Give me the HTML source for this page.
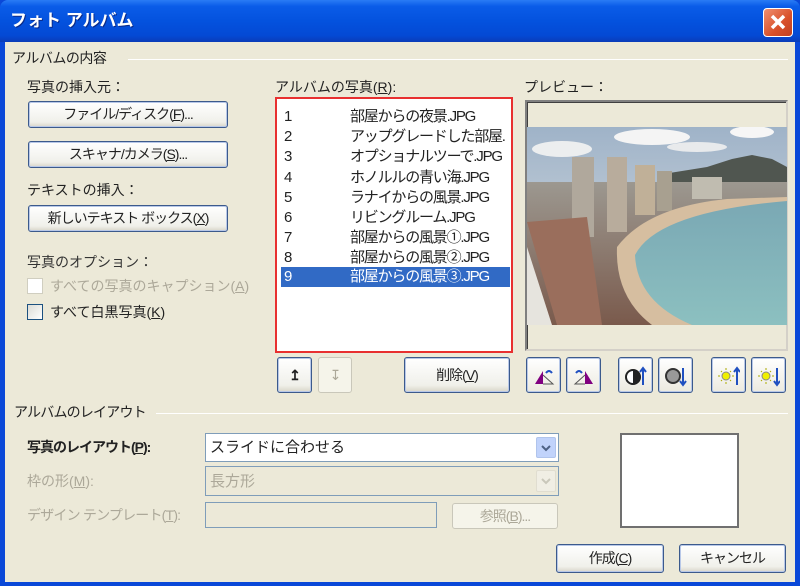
<!DOCTYPE html>
<html><head><meta charset="utf-8"><style>
*{box-sizing:border-box;margin:0;padding:0}
body{width:800px;height:586px;overflow:hidden;background:#0a48d8;font-family:"Liberation Sans","Noto Sans CJK JP",sans-serif;font-size:14px;color:#222;position:relative}
.a{position:absolute;white-space:nowrap;line-height:1}
#title{position:absolute;left:0;top:0;width:800px;height:42px;background:linear-gradient(#2a7cf5 0%,#0a5ce8 15%,#0452de 50%,#0449d4 85%,#0a3cb8 100%);border-radius:8px 8px 0 0}
#body{position:absolute;left:5px;top:42px;width:790px;height:540px;background:#ece9d8}
.btn{position:absolute;border:1px solid #3c5a8c;border-radius:3px;background:linear-gradient(#fff,#f0f0ea 80%,#d8d5c8);box-shadow:inset 0 0 0 1px #b8c8e8;text-align:center;font-size:14px;letter-spacing:-1px}
.dis{color:#aca899;border-color:#c9c7ba;box-shadow:none;background:#f5f4ea}
.line{position:absolute;height:1px;background:#c8c5b5;border-bottom:1px solid #fff}
.box{position:absolute;border:1px solid #7f9db9;background:#fff}
.row{position:absolute;left:4px;width:229px;height:20px;line-height:20px;font-size:15px;letter-spacing:-1.2px}
.row b{font-weight:normal;position:absolute;left:3px}
.row i{font-style:normal;position:absolute;left:69px}
.ib{position:absolute;top:357px;width:35px;height:36px;border:1px solid #3c5a8c;border-radius:3px;background:linear-gradient(#fff,#eceadf);box-shadow:inset 0 0 0 1px #b8c8e8}
.ib svg{position:absolute;left:6px;top:7px}
.g{color:#aca899}
</style></head><body>
<div id="title"></div>
<div class="a" style="left:10px;top:12px;color:#fff;font-weight:bold;font-size:17px;text-shadow:1px 1px #0a2a88">フォト アルバム</div>
<div style="position:absolute;left:763px;top:8px;width:30px;height:29px;border:1px solid #fff;border-radius:4px;background:linear-gradient(135deg,#f09070,#d8502a 60%,#c04020)"><svg width="28" height="27"><path d="M8 7L20 19M20 7L8 19" stroke="#fff" stroke-width="3.5"/></svg></div>
<div id="body"></div>

<div class="a" style="left:12px;top:51px;font-size:14px;letter-spacing:-.5px">アルバムの内容</div>
<div class="line" style="left:128px;top:59px;width:660px"></div>
<div class="a" style="left:27px;top:80px">写真の挿入元：</div>
<div class="btn" style="left:28px;top:101px;width:200px;height:27px;line-height:25px">ファイル/ディスク(<u>F</u>)...</div>
<div class="btn" style="left:28px;top:141px;width:200px;height:27px;line-height:25px">スキャナ/カメラ(<u>S</u>)...</div>
<div class="a" style="left:27px;top:183px">テキストの挿入：</div>
<div class="btn" style="left:28px;top:205px;width:200px;height:27px;line-height:25px">新しいテキスト ボックス(<u>X</u>)</div>
<div class="a" style="left:27px;top:255px;color:#333">写真のオプション：</div>
<div style="position:absolute;left:27px;top:278px;width:16px;height:16px;border:1px solid #d0cec0;background:#fff"></div>
<div class="a g" style="left:50px;top:279px">すべての写真のキャプション(<u>A</u>)</div>
<div style="position:absolute;left:27px;top:304px;width:16px;height:16px;border:1px solid #1c5180;background:linear-gradient(135deg,#dcdcd6,#fff)"></div>
<div class="a" style="left:50px;top:305px">すべて白黒写真(<u>K</u>)</div>

<div class="a" style="left:275px;top:80px">アルバムの写真(<u>R</u>):</div>
<div style="position:absolute;left:275px;top:97px;width:238px;height:256px;border:2px solid #e83030;background:#fff">
<div class="row" style="top:8px"><b>1</b><i>部屋からの夜景.JPG</i></div>
<div class="row" style="top:28px;overflow:hidden"><b>2</b><i>アップグレードした部屋.</i></div>
<div class="row" style="top:48px"><b>3</b><i>オプショナルツーで.JPG</i></div>
<div class="row" style="top:69px"><b>4</b><i>ホノルルの青い海.JPG</i></div>
<div class="row" style="top:89px"><b>5</b><i>ラナイからの風景.JPG</i></div>
<div class="row" style="top:109px"><b>6</b><i>リビングルーム.JPG</i></div>
<div class="row" style="top:129px;overflow:hidden"><b>7</b><i>部屋からの風景①.JPG</i></div>
<div class="row" style="top:149px;overflow:hidden"><b>8</b><i>部屋からの風景②.JPG</i></div>
<div class="row" style="top:168px;background:#316ac5;color:#fff;overflow:hidden"><b>9</b><i>部屋からの風景③.JPG</i></div>
</div>
<div class="btn" style="left:277px;top:357px;width:35px;height:36px;line-height:34px;font-weight:bold">↥</div>
<div class="btn dis" style="left:318px;top:357px;width:34px;height:36px;line-height:34px">↧</div>
<div class="btn" style="left:404px;top:357px;width:106px;height:36px;line-height:34px">削除(<u>V</u>)</div>

<div class="a" style="left:524px;top:80px">プレビュー：</div>
<div style="position:absolute;left:525px;top:100px;width:263px;height:251px;border:2px solid #808080;border-right-color:#d4d0c8;border-bottom-color:#d4d0c8;background:#ece9d8;box-shadow:inset 1px 1px #404040">
<svg width="260" height="198" style="position:absolute;left:0;top:25px">
<defs><linearGradient id="sky" x1="0" y1="0" x2="0" y2="1"><stop offset="0" stop-color="#9fb3c8"/><stop offset="1" stop-color="#dfe2e4"/></linearGradient>
<linearGradient id="sea" x1="0" y1="0" x2="0" y2="1"><stop offset="0" stop-color="#7aa8b4"/><stop offset="1" stop-color="#8cc0c0"/></linearGradient>
<linearGradient id="city" x1="0" y1="0" x2="0" y2="1"><stop offset="0" stop-color="#9c9890"/><stop offset="1" stop-color="#7a5a4c"/></linearGradient></defs>
<rect width="260" height="198" fill="url(#sky)"/>
<ellipse cx="125" cy="10" rx="38" ry="8" fill="#f4f4f4"/><ellipse cx="225" cy="5" rx="22" ry="6" fill="#f6f6f6"/><ellipse cx="35" cy="22" rx="30" ry="8" fill="#eceeef"/><ellipse cx="170" cy="20" rx="30" ry="5" fill="#e8eaec"/>
<path d="M130 48 L180 40 L205 32 L225 28 L245 32 L260 40 L260 72 L130 72Z" fill="#505650"/>
<path d="M0 55 L260 55 L260 198 L0 198Z" fill="url(#city)"/>
<rect x="45" y="30" width="22" height="80" fill="#b0a89c"/><rect x="80" y="30" width="20" height="75" fill="#b8ac9c"/>
<rect x="108" y="38" width="20" height="50" fill="#c0b098"/><rect x="130" y="44" width="15" height="40" fill="#a8a090"/>
<rect x="165" y="50" width="30" height="22" fill="#c0bcb0"/>
<path d="M0 95 L60 90 L75 198 L30 198 Z" fill="#9a6e5c"/>
<path d="M90 120 Q120 80 200 72 L260 70 L260 198 L125 198 Q88 170 90 120Z" fill="#d6bea0"/>
<path d="M108 128 Q130 85 260 74 L260 198 L165 198 Q110 175 108 128Z" fill="url(#sea)"/>
<path d="M0 120 L25 198 L0 198Z" fill="#e6e4de"/>
</svg>
</div>
<div class="ib" style="left:526px"><svg width="22" height="22"><path d="M2 19 L10 6 L10 19Z" fill="#800080"/><path d="M10 19 L20 19 L10 10" fill="none" stroke="#555"/><path d="M13 8 Q16 4 19 8" stroke="#2050c0" fill="none" stroke-width="2"/></svg></div>
<div class="ib" style="left:566px"><svg width="22" height="22"><path d="M20 19 L12 6 L12 19Z" fill="#800080"/><path d="M12 19 L2 19 L12 10" fill="none" stroke="#555"/><path d="M3 8 Q6 4 9 8" stroke="#2050c0" fill="none" stroke-width="2"/></svg></div>
<div class="ib" style="left:618px"><svg width="22" height="22"><circle cx="8" cy="12" r="7" fill="#fff" stroke="#222" stroke-width="2"/><path d="M8 5 A7 7 0 0 1 8 19Z" fill="#222"/><path d="M18 20V4M15 7L18 3L21 7" stroke="#2050c0" stroke-width="2" fill="none"/></svg></div>
<div class="ib" style="left:658px"><svg width="22" height="22"><circle cx="8" cy="11" r="7" fill="#999" stroke="#333" stroke-width="2"/><path d="M18 3V19M15 16L18 20L21 16" stroke="#2050c0" stroke-width="2" fill="none"/></svg></div>
<div class="ib" style="left:711px"><svg width="22" height="22"><circle cx="8" cy="11" r="4" fill="#f0f000" stroke="#888"/><path d="M8 3V5M8 17V19M0 11H2M14 11H16M3 6L4 7M13 6L12 7M3 16L4 15M13 16L12 15" stroke="#aa0"/><path d="M19 20V4M16 7L19 3L22 7" stroke="#2050c0" stroke-width="2" fill="none"/></svg></div>
<div class="ib" style="left:751px"><svg width="22" height="22"><circle cx="8" cy="11" r="4" fill="#f0f000" stroke="#888"/><path d="M8 3V5M8 17V19M0 11H2M14 11H16M3 6L4 7M13 6L12 7M3 16L4 15M13 16L12 15" stroke="#aa0"/><path d="M19 3V19M16 16L19 20L22 16" stroke="#2050c0" stroke-width="2" fill="none"/></svg></div>

<div class="a" style="left:14px;top:405px;letter-spacing:-.8px">アルバムのレイアウト</div>
<div class="line" style="left:156px;top:413px;width:632px"></div>
<div class="a" style="left:27px;top:440px;font-weight:bold;letter-spacing:-1px">写真のレイアウト(<u>P</u>):</div>
<div class="box" style="left:205px;top:433px;width:354px;height:29px"><span class="a" style="left:4px;top:6px;font-size:15px">スライドに合わせる</span>
<div style="position:absolute;right:2px;top:3px;width:20px;height:21px;background:#c1d3fb;border:1px solid #b0c4ec;border-radius:2px"><svg width="18" height="19"><path d="M5 8L9 12L13 8" stroke="#4d6185" stroke-width="2" fill="none"/></svg></div></div>
<div class="a g" style="left:27px;top:474px">枠の形(<u>M</u>):</div>
<div class="box" style="left:205px;top:466px;width:354px;height:30px;background:#ece9d8"><span class="a g" style="left:4px;top:7px;font-size:15px">長方形</span>
<div style="position:absolute;right:2px;top:3px;width:20px;height:22px;border:1px solid #e0ddd0;border-radius:2px;background:#f0eee4"><svg width="18" height="20"><path d="M5 8L9 12L13 8" stroke="#c9c7ba" stroke-width="2" fill="none"/></svg></div></div>
<div class="a g" style="left:27px;top:508px;letter-spacing:-.8px">デザイン テンプレート(<u>T</u>):</div>
<div class="box" style="left:205px;top:502px;width:232px;height:26px;background:#ece9d8"></div>
<div class="btn dis" style="left:452px;top:503px;width:106px;height:26px;line-height:24px">参照(<u>B</u>)...</div>
<div style="position:absolute;left:620px;top:433px;width:119px;height:95px;border:2px solid #707070;background:#fff"></div>
<div class="btn" style="left:556px;top:544px;width:108px;height:29px;line-height:27px">作成(<u>C</u>)</div>
<div class="btn" style="left:679px;top:544px;width:107px;height:29px;line-height:27px">キャンセル</div>
</body></html>
